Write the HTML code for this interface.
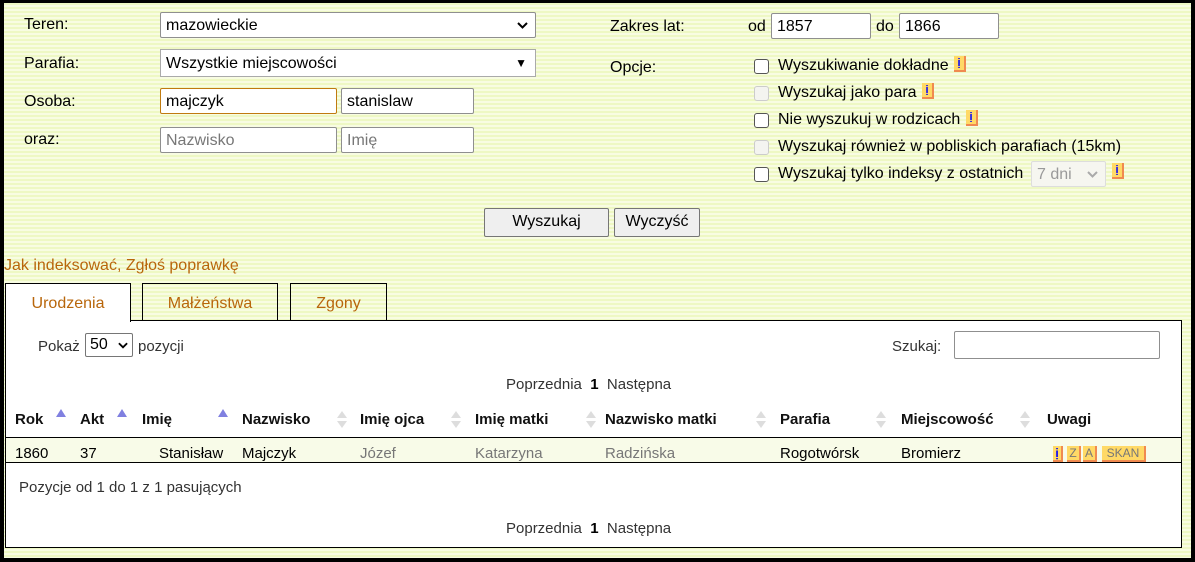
<!DOCTYPE html>
<html><head><meta charset="utf-8"><style>
*{box-sizing:border-box;margin:0;padding:0}
body{width:1195px;height:562px;background:#000;font-family:"Liberation Sans",sans-serif;font-size:16px;color:#000;overflow:hidden;position:relative}
#pg{position:absolute;left:4px;top:3px;width:1187px;height:555px;background:repeating-linear-gradient(#eef8c4 0 2px,#f8fce2 2px 4px)}
.a{position:absolute;white-space:nowrap}
.in{position:absolute;background:#fff;border:1px solid #8f8f8f;border-radius:2px;padding-left:5px;font-size:16px;line-height:25px;height:26px}
.cb{position:absolute;width:15px;height:15px;border:1px solid #555;border-radius:3px;background:#fff}
.cb.d{border-color:#ccc;background:#f4f4f0}
.i{position:absolute;width:12px;height:16px;background:#ffd966;border-right:2px solid #f08a50;border-bottom:2px solid #f08a50;color:#00f;font-size:11px;font-weight:bold;text-align:center;line-height:14px}
.btn{position:absolute;background:#efefef;border:1px solid #767676;border-radius:2px;text-align:center;line-height:26px;height:29px}
.tab{position:absolute;top:280px;height:38px;border:1px solid #000;border-bottom:none;color:#b8660b;text-align:center;line-height:40px}
.th{position:absolute;top:408px;font-weight:bold;font-size:15px;color:#111}
.td{position:absolute;top:442px;font-size:15px}
.up{position:absolute;width:0;height:0;border-left:5px solid transparent;border-right:5px solid transparent;border-bottom:8px solid #8080e0}
.bo{position:absolute;width:10px;height:18px}
.bo:before{content:"";position:absolute;left:0;top:0;border-left:5px solid transparent;border-right:5px solid transparent;border-bottom:7px solid #ddd}
.bo:after{content:"";position:absolute;left:0;top:10px;border-left:5px solid transparent;border-right:5px solid transparent;border-top:7px solid #ddd}
.g{color:#777}
.bd{position:absolute;height:16px;background:#ffd966;border-right:2px solid #f08a50;border-bottom:2px solid #f08a50;color:#777;font-size:12px;line-height:15px;text-align:center;top:443px}
.chev{position:absolute;right:7px;top:9px}
</style></head><body><div id="pg">
<div class="a" style="left:20px;top:13px">Teren:</div>
<div class="in" style="left:156px;top:9px;width:376px;">mazowieckie<svg class="chev" width="11" height="7" viewBox="0 0 11 7"><path d="M1 1l4.5 4.5L10 1" stroke="#000" stroke-width="2" fill="none"/></svg></div>
<div class="a" style="left:20px;top:52px">Parafia:</div>
<div class="in" style="left:156px;top:46px;width:376px;height:28px;line-height:27px;border-color:#aaa;border-radius:0">Wszystkie miejscowości<span style="position:absolute;right:8px;top:0;font-size:12px">▼</span></div>
<div class="a" style="left:20px;top:90px">Osoba:</div>
<div class="in" style="left:156px;top:85px;width:177px;border-color:#c07a10">majczyk</div>
<div class="in" style="left:337px;top:85px;width:133px">stanislaw</div>
<div class="a" style="left:20px;top:128px">oraz:</div>
<div class="in" style="left:156px;top:124px;width:177px;color:#777">Nazwisko</div>
<div class="in" style="left:337px;top:124px;width:133px;color:#777">Imię</div>

<div class="a" style="left:606px;top:15px">Zakres lat:</div>
<div class="a" style="left:744px;top:15px">od</div>
<div class="in" style="left:767px;top:10px;width:100px">1857</div>
<div class="a" style="left:872px;top:15px">do</div>
<div class="in" style="left:895px;top:10px;width:100px">1866</div>
<div class="a" style="left:606px;top:56px">Opcje:</div>
<div class="cb" style="left:750px;top:56px"></div><div class="a" style="left:774px;top:54px">Wyszukiwanie dokładne</div><div class="i" style="left:950px;top:53px">ị</div>
<div class="cb d" style="left:750px;top:83px"></div><div class="a" style="left:774px;top:81px">Wyszukaj jako para</div><div class="i" style="left:918px;top:80px">ị</div>
<div class="cb" style="left:750px;top:110px"></div><div class="a" style="left:774px;top:108px">Nie wyszukuj w rodzicach</div><div class="i" style="left:962px;top:107px">ị</div>
<div class="cb d" style="left:750px;top:137px"></div><div class="a" style="left:774px;top:135px">Wyszukaj również w pobliskich parafiach (15km)</div>
<div class="cb" style="left:750px;top:164px"></div><div class="a" style="left:774px;top:162px">Wyszukaj tylko indeksy z ostatnich</div>
<div class="in" style="left:1027px;top:158px;width:75px;color:#999;border-color:#ddd;background:#f6f6f0">7 dni<svg class="chev" width="11" height="7" viewBox="0 0 11 7"><path d="M1 1l4.5 4.5L10 1" stroke="#aaa" stroke-width="2" fill="none"/></svg></div>
<div class="i" style="left:1108px;top:160px">ị</div>

<div class="btn" style="left:480px;top:205px;width:125px">Wyszukaj</div>
<div class="btn" style="left:610px;top:205px;width:86px">Wyczyść</div>

<div class="a" style="left:0;top:254px;color:#b8660b">Jak indeksować, Zgłoś poprawkę</div>
<div style="position:absolute;left:1px;top:317px;width:1177px;height:228px;background:#fff;border:1px solid #000"></div>
<div class="tab" style="left:1px;width:126px;top:280px;height:39px;background:#fff;border-right:1px solid #000">Urodzenia</div>
<div class="tab" style="left:138px;width:136px">Małżeństwa</div>
<div class="tab" style="left:286px;width:97px">Zgony</div>

<div class="a" style="left:34px;top:335px;color:#333;font-size:15px">Pokaż</div>
<div class="in" style="left:81px;top:330px;width:48px;height:24px;line-height:22px;padding-left:4px;border-color:#767676">50<svg class="chev" style="right:4px;top:8px" width="10" height="7" viewBox="0 0 11 7"><path d="M1 1l4.5 4.5L10 1" stroke="#000" stroke-width="2" fill="none"/></svg></div>
<div class="a" style="left:134px;top:335px;color:#333;font-size:15px">pozycji</div>
<div class="a" style="left:888px;top:335px;color:#333;font-size:15px">Szukaj:</div>
<div class="in" style="left:950px;top:328px;width:206px;height:28px"></div>
<div class="a" style="left:502px;top:373px;color:#333;font-size:15px">Poprzednia &nbsp;<b style="color:#000">1</b>&nbsp; Następna</div>

<div class="th" style="left:11px">Rok</div><div class="up" style="left:52px;top:406px"></div>
<div class="th" style="left:76px">Akt</div><div class="up" style="left:113px;top:406px"></div>
<div class="th" style="left:138px">Imię</div><div class="up" style="left:214px;top:406px"></div>
<div class="th" style="left:238px">Nazwisko</div><div class="bo" style="left:333px;top:408px"></div>
<div class="th" style="left:356px">Imię ojca</div><div class="bo" style="left:447px;top:408px"></div>
<div class="th" style="left:471px">Imię matki</div><div class="bo" style="left:582px;top:408px"></div>
<div class="th" style="left:601px">Nazwisko matki</div><div class="bo" style="left:752px;top:408px"></div>
<div class="th" style="left:776px">Parafia</div><div class="bo" style="left:872px;top:408px"></div>
<div class="th" style="left:897px">Miejscowość</div><div class="bo" style="left:1016px;top:408px"></div>
<div class="th" style="left:1043px">Uwagi</div>
<div style="position:absolute;left:2px;top:434px;width:1175px;height:26px;background:#f8fbe8;border-top:1px solid #000;border-bottom:1px solid #000"></div>
<div class="td" style="left:11px">1860</div>
<div class="td" style="left:76px">37</div>
<div class="td" style="left:155px">Stanisław</div>
<div class="td" style="left:238px">Majczyk</div>
<div class="td g" style="left:356px">Józef</div>
<div class="td g" style="left:471px">Katarzyna</div>
<div class="td g" style="left:601px">Radzińska</div>
<div class="td" style="left:776px">Rogotwórsk</div>
<div class="td" style="left:897px">Bromierz</div>
<div class="bd" style="left:1049px;width:10px;color:#00f;font-weight:bold">ị</div>
<div class="bd" style="left:1063px;width:14px">Z</div>
<div class="bd" style="left:1079px;width:14px">A</div>
<div class="bd" style="left:1098px;width:44px">SKAN</div>
<div class="a" style="left:15px;top:476px;color:#333;font-size:15px">Pozycje od 1 do 1 z 1 pasujących</div>
<div class="a" style="left:502px;top:517px;color:#333;font-size:15px">Poprzednia &nbsp;<b style="color:#000">1</b>&nbsp; Następna</div>
</div></body></html>
